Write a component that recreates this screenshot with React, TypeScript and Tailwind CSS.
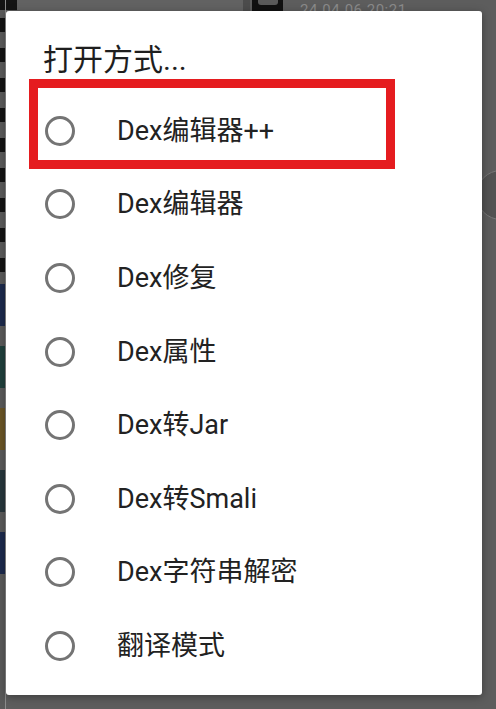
import React from "react";

const items = [
  "Dex编辑器++",
  "Dex编辑器",
  "Dex修复",
  "Dex属性",
  "Dex转Jar",
  "Dex转Smali",
  "Dex字符串解密",
  "翻译模式",
];

const font = { fontFamily: 'Roboto, "Noto Sans CJK SC", sans-serif' };

export default function App() {
  const dashes = Array.from({ length: 9 }, (_, i) => i);
  return (
    <div className="relative w-[496px] h-[709px] overflow-hidden bg-[#5d5d5d]" style={font}>
      {/* background (dimmed) */}
      <div className="absolute inset-0 flex">
        <div className="w-[5px] flex flex-col bg-[#5a5a5a]">
          <div className="h-[10px] bg-[#141414]" />
          <div className="flex flex-col gap-[16px] pt-[8px]">
            {dashes.map((i) => (
              <div key={i} className="h-[14px] bg-[#121212]" />
            ))}
          </div>
          <div className="flex flex-col gap-[20px] mt-[12px]">
            <div className="h-[42px] bg-[#1c2a4c]" />
            <div className="h-[42px] bg-[#20403c]" />
            <div className="h-[42px] bg-[#6a5526]" />
            <div className="h-[42px] bg-[#27363c]" />
            <div className="h-[42px] bg-[#1c2a4c]" />
          </div>
        </div>
        <div className="w-[1px] bg-[#8c8c8c]" />
        <div className="flex-1 flex flex-col">
          <div className="h-[24px] flex items-start">
            <div className="w-[11px] h-[10px] bg-[#141414]" />
            <div className="w-[226px] h-[12px] bg-[#626262]" />
            <div className="w-[7px] h-[12px] bg-[#4c4c4c]" />
            <div className="w-[2px]" />
            <div className="w-[31px] h-[12px] bg-[#111111] flex justify-center">
              <div className="w-[20px] h-[5px] bg-[#5a5a5a] rounded-b-[3px]" />
            </div>
            <div className="ml-[17px] mt-[1px] text-[15px] leading-[18px] text-[#8a8a8a] tracking-[0.5px]">
              24.04.06 20:21
            </div>
          </div>
        </div>
      </div>
      <div className="absolute left-[476px] top-[170px] w-[50px] h-[50px] rounded-full border border-[#777] bg-[#525252]" />

      {/* dialog */}
      <div className="absolute left-[6px] top-[11px] w-[476px] h-[684px] bg-white rounded-[3px] shadow-[0_2px_8px_rgba(0,0,0,0.35)]">
        <div className="h-[83px] pl-[37px] pt-[31px] text-[30px] leading-[36px] text-[#1e1e1e]">
          打开方式...
        </div>
        <div className="flex flex-col">
          {items.map((t) => (
            <div key={t} className="h-[73.6px] flex items-center pl-[39px]">
              <div className="w-[30px] h-[30px] rounded-full border-[3px] border-[#747474] shrink-0" />
              <div className="ml-[42px] text-[27px] leading-[32px] text-[#222222]">{t}</div>
            </div>
          ))}
        </div>
        <div className="absolute left-[23px] top-[68px] w-[366px] h-[90px] border-[9px] border-[#e51c1f]" />
      </div>
    </div>
  );
}
